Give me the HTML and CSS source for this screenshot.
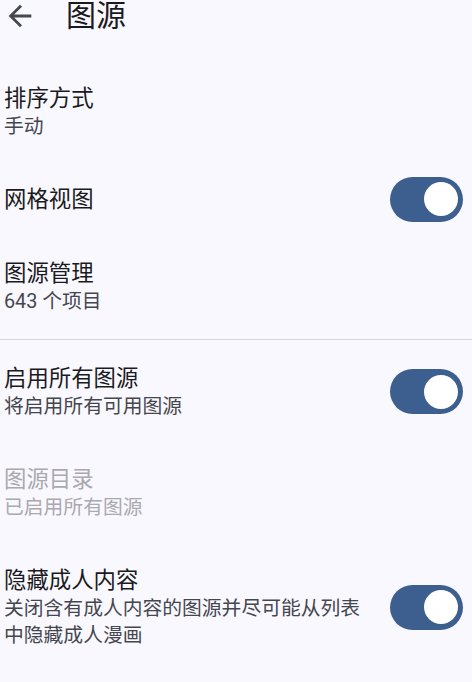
FILE: index.html
```html
<!DOCTYPE html>
<html lang="zh-CN">
<head>
  <meta charset="UTF-8">
  <meta name="viewport" content="width=device-width, initial-scale=1.0">
  <title>图源</title>
  <link rel="stylesheet" href="styles.css">
</head>
<body>
  <header class="top-bar">
    <svg class="back-icon" viewBox="0 0 24 24" aria-hidden="true">
      <path d="M20 11H7.83l5.59-5.59L12 4l-8 8 8 8 1.41-1.41L7.83 13H20v-2z"/>
    </svg>
    <h1 class="top-title">图源</h1>
  </header>

  <div class="pref-row">
    <div class="pref-text">
      <div class="pref-title">排序方式</div>
      <div class="pref-summary">手动</div>
    </div>
  </div>

  <div class="pref-row">
    <div class="pref-text">
      <div class="pref-title">网格视图</div>
    </div>
    <div class="switch"><div class="switch-thumb"></div></div>
  </div>

  <div class="pref-row">
    <div class="pref-text">
      <div class="pref-title">图源管理</div>
      <div class="pref-summary">643 个项目</div>
    </div>
  </div>

  <hr class="divider">

  <div class="pref-row">
    <div class="pref-text">
      <div class="pref-title">启用所有图源</div>
      <div class="pref-summary">将启用所有可用图源</div>
    </div>
    <div class="switch"><div class="switch-thumb"></div></div>
  </div>

  <div class="pref-row disabled">
    <div class="pref-text">
      <div class="pref-title">图源目录</div>
      <div class="pref-summary">已启用所有图源</div>
    </div>
  </div>

  <div class="pref-row">
    <div class="pref-text">
      <div class="pref-title">隐藏成人内容</div>
      <div class="pref-summary">关闭含有成人内容的图源并尽可能从列表中隐藏成人漫画</div>
    </div>
    <div class="switch"><div class="switch-thumb"></div></div>
  </div>
</body>
</html>
```

FILE: styles.css
```css
body {
  margin: 0;
  background-color: #faf8ff;
  color: #1a1b21;
  font-family: Roboto, "Noto Sans CJK SC", sans-serif;
}

.top-bar {
  display: flex;
  align-items: center;
  height: 32px;
  padding-bottom: 29px;
}

.back-icon {
  width: 34px;
  height: 34px;
  margin-left: 3px;
  fill: #44474f;
}

.top-title {
  margin: 0 0 0 29px;
  font-size: 30px;
  font-weight: 400;
  line-height: 32px;
}

.pref-row {
  display: flex;
  align-items: center;
  gap: 16px;
  padding: 22px 9px 22px 4px;
}

.pref-text {
  flex: 1;
}

.pref-title {
  font-size: 22.4px;
  line-height: 30px;
}

.pref-summary {
  font-size: 19.8px;
  line-height: 27px;
  color: #45474e;
}

.disabled .pref-title,
.disabled .pref-summary {
  color: #a9a9af;
}

.switch {
  display: flex;
  align-items: center;
  justify-content: flex-end;
  width: 73px;
  height: 45px;
  margin: -8px 0;
  padding: 0 5px;
  box-sizing: border-box;
  border-radius: 23px;
  background-color: #3d5f8f;
  flex-shrink: 0;
}

.switch-thumb {
  width: 34px;
  height: 34px;
  border-radius: 50%;
  background-color: #fff;
}

.divider {
  height: 1px;
  margin: 2px 0 1px;
  border: none;
  background-color: #d6d5db;
}
```
